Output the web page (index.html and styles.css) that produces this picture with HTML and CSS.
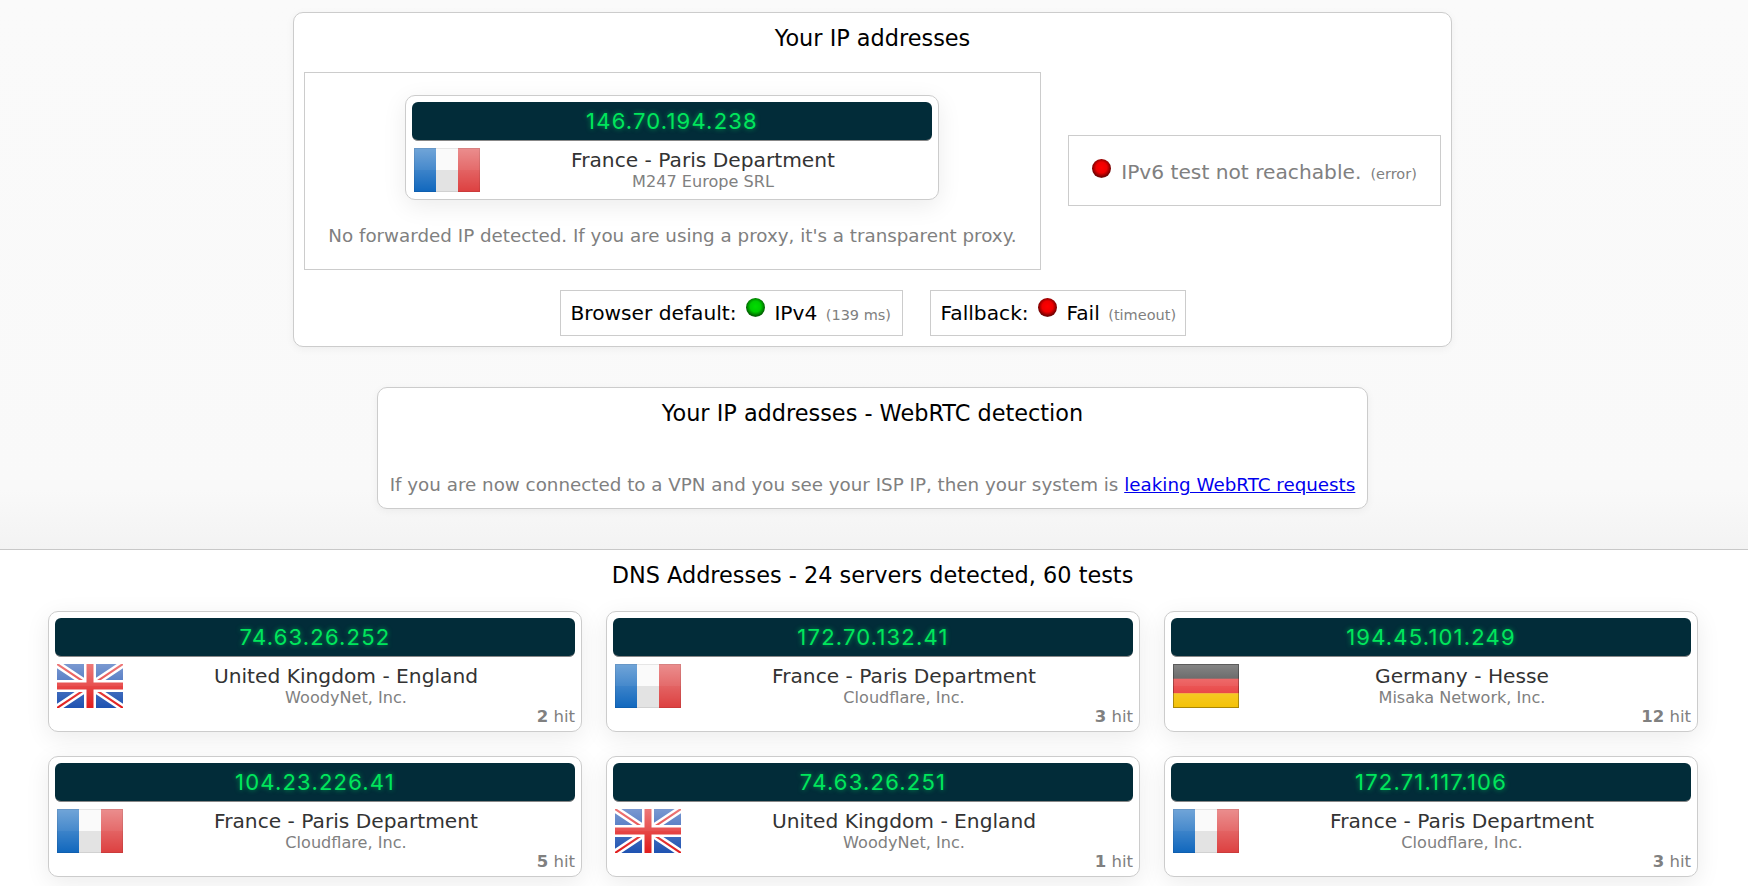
FILE: index.html
```html
<!DOCTYPE html>
<html lang="en">
<head>
<meta charset="utf-8">
<title>Your IP addresses</title>
<link rel="stylesheet" href="styles.css">
</head>
<body>
<svg class="defs" width="0" height="0" aria-hidden="true">
  <defs>
    <linearGradient id="gloss" x1="0" y1="0" x2="0" y2="1">
      <stop offset="0" stop-color="#fff" stop-opacity=".42"/>
      <stop offset=".5" stop-color="#fff" stop-opacity=".24"/>
      <stop offset=".5" stop-color="#fff" stop-opacity=".2"/>
      <stop offset="1" stop-color="#fff" stop-opacity=".02"/>
    </linearGradient>
    <symbol id="fr" viewBox="0 0 66 44">
      <rect width="22" height="44" fill="#0b64bc"/>
      <rect x="44" width="22" height="44" fill="#dc3c3c"/>
      <rect width="66" height="44" fill="url(#gloss)"/>
      <rect x="22" width="22" height="22" fill="#fafafa"/>
      <rect x="22" y="22" width="22" height="22" fill="#e3e3e3"/>
      <rect x=".5" y=".5" width="65" height="43" fill="none" stroke="#000" stroke-opacity=".08"/>
    </symbol>
    <symbol id="uk" viewBox="0 0 66 44">
      <rect width="66" height="44" fill="#1a4fb0"/>
      <path d="M0 0L66 44M66 0L0 44" stroke="#fff" stroke-width="7"/>
      <path d="M0 0L66 44M66 0L0 44" stroke="#e01818" stroke-width="2.2"/>
      <path d="M33 0V44M0 22H66" stroke="#fff" stroke-width="12"/>
      <path d="M33 0V44M0 22H66" stroke="#e01818" stroke-width="7"/>
      <rect width="66" height="44" fill="url(#gloss)"/>
    </symbol>
    <symbol id="de" viewBox="0 0 66 44">
      <rect width="66" height="15" fill="#2e2e2e"/>
      <rect y="14.7" width="66" height="15" fill="#e62a2a"/>
      <rect y="29.3" width="66" height="14.7" fill="#f4c000"/>
      <rect width="66" height="44" fill="url(#gloss)"/>
      <rect x=".5" y=".5" width="65" height="43" fill="none" stroke="#000" stroke-opacity=".3"/>
    </symbol>
  </defs>
</svg>

<section class="top">
  <div class="panel panel-ip">
    <h2 class="title">Your IP addresses</h2>
    <div class="ip-row">
      <div class="box box-v4">
        <div class="card card-main">
          <div class="ip">146.70.194.238</div>
          <div class="info">
            <svg class="flag"><use href="#fr"/></svg>
            <div class="place">
              <div class="country">France - Paris Department</div>
              <div class="isp">M247 Europe SRL</div>
            </div>
          </div>
        </div>
        <p class="note">No forwarded IP detected. If you are using a proxy, it's a transparent proxy.</p>
      </div>
      <div class="box box-v6">
        <span class="dot dot-red"></span>
        <span class="v6-text">IPv6 test not reachable.</span>
        <small class="paren">(error)</small>
      </div>
    </div>
    <div class="status-row">
      <div class="box status status-a">Browser default: <span class="dot dot-green"></span> IPv4 <small class="paren">(139 ms)</small></div>
      <div class="box status status-b">Fallback: <span class="dot dot-red"></span> Fail <small class="paren">(timeout)</small></div>
    </div>
  </div>

  <div class="panel panel-rtc">
    <h2 class="title">Your IP addresses - WebRTC detection</h2>
    <p class="rtc-note">If you are now connected to a VPN and you see your ISP IP, then your system is <a href="#">leaking WebRTC requests</a></p>
  </div>
</section>

<section class="dns">
  <h2 class="title dns-title">DNS Addresses - 24 servers detected, 60 tests</h2>
  <div class="grid">
    <div class="card">
      <div class="ip">74.63.26.252</div>
      <div class="info"><svg class="flag"><use href="#uk"/></svg><div class="place"><div class="country">United Kingdom - England</div><div class="isp">WoodyNet, Inc.</div></div></div>
      <div class="hits"><b>2</b> hit</div>
    </div>
    <div class="card">
      <div class="ip">172.70.132.41</div>
      <div class="info"><svg class="flag"><use href="#fr"/></svg><div class="place"><div class="country">France - Paris Department</div><div class="isp">Cloudflare, Inc.</div></div></div>
      <div class="hits"><b>3</b> hit</div>
    </div>
    <div class="card">
      <div class="ip">194.45.101.249</div>
      <div class="info"><svg class="flag"><use href="#de"/></svg><div class="place"><div class="country">Germany - Hesse</div><div class="isp">Misaka Network, Inc.</div></div></div>
      <div class="hits"><b>12</b> hit</div>
    </div>
    <div class="card">
      <div class="ip">104.23.226.41</div>
      <div class="info"><svg class="flag"><use href="#fr"/></svg><div class="place"><div class="country">France - Paris Department</div><div class="isp">Cloudflare, Inc.</div></div></div>
      <div class="hits"><b>5</b> hit</div>
    </div>
    <div class="card">
      <div class="ip">74.63.26.251</div>
      <div class="info"><svg class="flag"><use href="#uk"/></svg><div class="place"><div class="country">United Kingdom - England</div><div class="isp">WoodyNet, Inc.</div></div></div>
      <div class="hits"><b>1</b> hit</div>
    </div>
    <div class="card">
      <div class="ip">172.71.117.106</div>
      <div class="info"><svg class="flag"><use href="#fr"/></svg><div class="place"><div class="country">France - Paris Department</div><div class="isp">Cloudflare, Inc.</div></div></div>
      <div class="hits"><b>3</b> hit</div>
    </div>
  </div>
</section>
</body>
</html>
```
FILE: styles.css
```css
* { box-sizing: border-box; }
html, body { margin: 0; padding: 0; height: 886px; overflow: hidden; }
body { background: #fff; color: #000; font-family: "DejaVu Sans", Verdana, sans-serif; }
.defs { display: block; width: 0; height: 0; }

.top {
  height: 550px;
  padding: 12px 3px 0 0;
  background: linear-gradient(to bottom, #fafafa 0, #f9f9f9 490px, #f3f3f3 549px);
  border-bottom: 1px solid #c8c8c8;
}
.panel {
  margin: 0 auto;
  background: #fff;
  border: 1px solid #ccc;
  border-radius: 10px;
  box-shadow: 0 2px 8px rgba(0, 0, 0, .05);
}
.panel-ip { width: 1159px; height: 335px; padding: 0 10px; }
.panel-rtc { width: 991px; height: 122px; margin-top: 40px; }
.title {
  margin: 0;
  font-size: 22.4px;
  font-weight: 400;
  line-height: 24px;
  text-align: center;
}
.panel .title { padding-top: 13px; }

.box { border: 1px solid #ccc; background: #fff; }
.ip-row { display: flex; align-items: flex-start; gap: 27px; margin-top: 22px; }
.box-v4 { width: 737px; height: 198px; padding-top: 22px; flex: none; }
.box-v6 {
  width: 373px;
  height: 71px;
  margin-top: 63px;
  padding-top: 2px;
  display: flex;
  align-items: center;
  justify-content: center;
  color: #808080;
  font-size: 20.2px;
  flex: none;
}
.box-v6 .dot { margin-right: 10px; position: relative; top: -3px; }
.box-v6 .paren { margin-left: 9px; position: relative; top: 2px; }
.paren { color: #808080; font-size: 14.5px; }
.status .paren { margin-left: 2px; }

.card {
  position: relative;
  height: 121px;
  padding: 6px;
  background: #fff;
  border: 1px solid #ccc;
  border-radius: 10px;
  box-shadow: 0 6px 24px rgba(0, 0, 0, .08);
}
.card-main { width: 534px; height: 105px; margin: 0 0 0 100px; }
.ip {
  height: 39px;
  background: #022c39;
  border-bottom: 1px solid #888;
  border-radius: 6px;
  color: #00e65c;
  font-family: Inter, sans-serif;
  font-weight: 400;
  font-size: 22px;
  line-height: 39px;
  letter-spacing: 1.2px;
  text-align: center;
  text-shadow: 0 0 5px rgba(0, 230, 92, .6);
}
.info { display: flex; margin-top: 7px; }
.flag { width: 66px; height: 44px; margin-left: 2px; flex: none; }
.place { flex: 1; text-align: center; padding-right: 6px; }
.country { color: #333; font-size: 20.2px; line-height: 24px; }
.isp { color: #808080; font-size: 16.1px; line-height: 19px; }
.note {
  margin: 25px 0 0;
  color: #808080;
  font-size: 18.3px;
  line-height: 22px;
  text-align: center;
}
.status-row { display: flex; justify-content: center; gap: 27px; margin-top: 20px; }
.status {
  height: 46px;
  padding: 0 10px;
  font-size: 20.2px;
  line-height: 45px;
  white-space: nowrap;
}
.status-a { width: 343px; }
.status-b { width: 256px; }
.status .dot { margin: 0 3px 0 3px; vertical-align: 3px; }
.dot {
  display: inline-block;
  width: 19px;
  height: 19px;
  border-radius: 50%;
}
.dot-red { background: radial-gradient(circle at 50% 45%, #f00 0, #e00 38%, #700 66%, #888 90%, #ccc 100%); }
.dot-green { background: radial-gradient(circle at 50% 45%, #0d0 0, #0c0 38%, #060 66%, #888 90%, #ccc 100%); }

.rtc-note {
  margin: 49px 0 0;
  color: #808080;
  font-size: 18.3px;
  line-height: 22px;
  text-align: center;
}
a { color: #00e; }

.dns { padding: 13px 3px 0 0; }
.dns-title { margin-bottom: 24px; }
.grid {
  display: grid;
  grid-template-columns: repeat(3, 534px);
  gap: 24px;
  padding-left: 48px;
}
.hits {
  position: absolute;
  right: 6px;
  bottom: 5px;
  color: #808080;
  font-size: 16.5px;
}
```
